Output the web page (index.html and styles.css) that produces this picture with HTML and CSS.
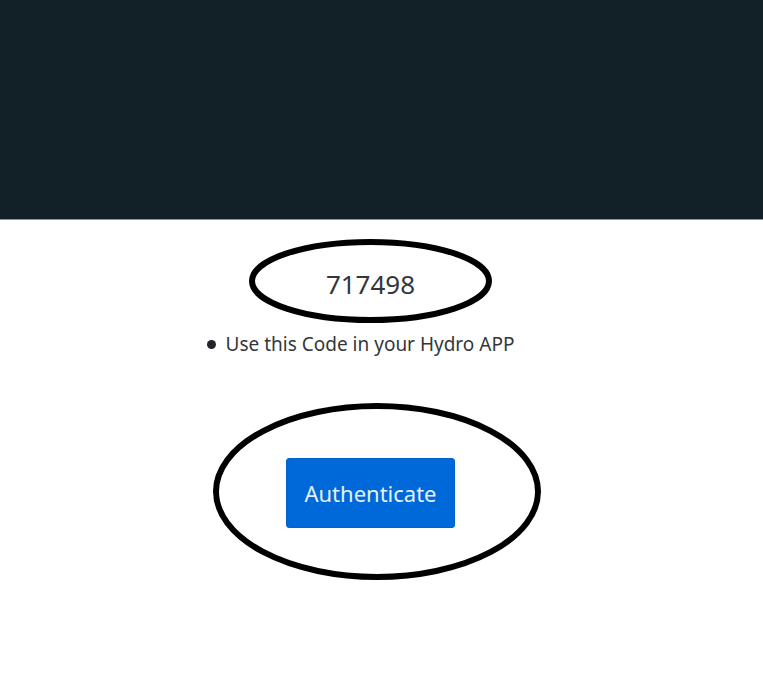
FILE: index.html
```html
<!DOCTYPE html>
<html lang="en">
<head>
<meta charset="utf-8">
<meta name="viewport" content="width=device-width, initial-scale=1">
<title>Hydro authentication</title>
<link rel="stylesheet" href="styles.css">
</head>
<body>
<header class="banner"></header>
<main class="content">
  <div class="code-ring">
    <svg class="ring" viewBox="0 0 243 84" aria-hidden="true"><ellipse cx="121.5" cy="42" rx="118.5" ry="39"/></svg>
    <p class="code">717498</p>
  </div>
  <ul class="hints">
    <li>Use this Code in your Hydro APP</li>
  </ul>
  <div class="action-ring">
    <svg class="ring" viewBox="0 0 328 177" aria-hidden="true"><ellipse cx="164" cy="88.5" rx="161" ry="85.5"/></svg>
    <button class="authenticate" type="button">Authenticate</button>
  </div>
</main>
</body>
</html>
```
FILE: styles.css
```css
* { box-sizing: border-box; }
body {
  margin: 0;
  background: #fff;
  color: #33373b;
  font-family: "Noto Sans", sans-serif;
}
.banner {
  height: 220px;
  border-bottom: 1px solid #8c979f;
  background: #122027;
}
.content {
  display: flex;
  flex-direction: column;
  align-items: center;
  padding: 19px 22px 40px 0;
}
.code-ring,
.action-ring {
  position: relative;
  display: flex;
  align-items: center;
  justify-content: center;
}
.code-ring {
  width: 243px;
  height: 84px;
  padding-top: 6px;
}
.action-ring {
  width: 328px;
  height: 177px;
  margin-left: 12px;
  padding: 2px 12px 0 0;
}
.ring {
  position: absolute;
  inset: 0;
  width: 100%;
  height: 100%;
  fill: none;
  stroke: #000;
  stroke-width: 6px;
  pointer-events: none;
}
.code {
  margin: 0;
  font-size: 26px;
  line-height: 32px;
}
.hints {
  margin: 7px 20px 45px 0;
  padding: 0;
  list-style: none;
  font-size: 19px;
  line-height: 28px;
}
.hints li {
  display: flex;
  align-items: center;
  gap: 10px;
}
.hints li::before {
  content: "";
  width: 9px;
  height: 9px;
  border-radius: 50%;
  background: #212529;
}
.authenticate {
  height: 70px;
  padding: 0 17px;
  border: 1px solid #0062cc;
  border-radius: 3px;
  background: #0069d9;
  color: #e6f1fd;
  font-family: inherit;
  font-size: 22px;
}
```
